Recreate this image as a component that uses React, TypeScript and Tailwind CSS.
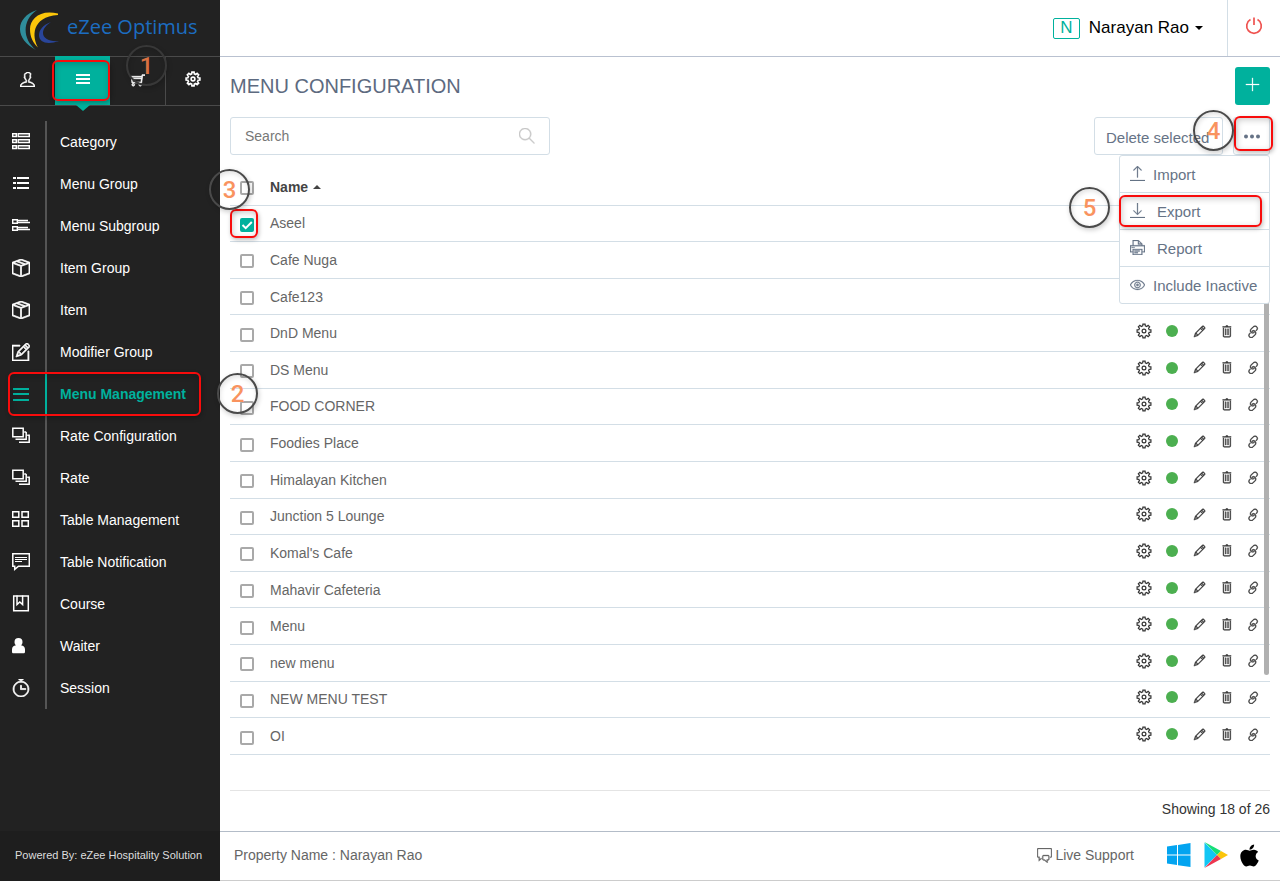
import React from 'react';
import {
  TfiUser, TfiShoppingCart, TfiPackage, TfiPencilAlt, TfiTimer, TfiPencil, TfiTrash,
  TfiLink, TfiSearch, TfiPlus, TfiPrinter, TfiEye, TfiUpload, TfiDownload, TfiComments,
} from 'react-icons/tfi';
import { FaApple } from 'react-icons/fa';

interface MenuItem {
  name: string;
  checked?: boolean;
}

interface NavItem {
  label: string;
  icon: React.ReactNode;
  active?: boolean;
}

const Line = ({ children }: { children: React.ReactNode }) => (
  <svg width="18" height="18" viewBox="0 0 18 18" fill="none" stroke="currentColor" className="shrink-0">
    {children}
  </svg>
);

const ListIcon = () => (
  <Line>
    <path strokeWidth="1.4" d="M.7 .8h3.6v2.700H.7zM6.200 .8h11.100v2.700H6.200zM.7 6.800h3.600v2.700H.7zM6.200 6.800h11.100v2.700H6.200zM.7 12.800h3.600v2.700H.7zM6.200 12.800h11.100v2.700H6.200z" />
  </Line>
);

const BulletIcon = () => (
  <Line>
    <path strokeWidth="2" d="M1 3h3M5 3h12M1 8h3M5 8h12M1 13h3M5 13h12" />
  </Line>
);

const ThumbIcon = () => (
  <Line>
    <path strokeWidth="1.4" d="M.7 2.700h4.600v3.600H.7zM.7 9.700h4.600v3.600H.7z" />
    <path strokeWidth="1.300" d="M6 3.500h10M6 5.500h12M6 10.500h10M6 12.500h12" />
  </Line>
);

const BarsIcon = () => (
  <Line>
    <path strokeWidth="2" d="M1 4h16M1 9h16M1 15h16" />
  </Line>
);

const StackIcon = () => (
  <Line>
    <path strokeWidth="1.5" d="M.8 1.300h10.400v8.400H.8zM3.500 12.200h10.700V5M14.200 5h-2M7 15.200h10.200V8.200h-2" />
  </Line>
);

const GridIcon = () => (
  <Line>
    <path strokeWidth="1.5" d="M.7 .7h6.100v5.600H.7zM10 .7h6.300v5.600H10zM.7 9.700h6.100v5.600H.7zM10 9.700h6.300v5.600H10z" />
  </Line>
);

const NoteIcon = () => (
  <Line>
    <path strokeWidth="1.5" d="M.8 .8h16.500v12.400H6.500L2.700 16.400v-3.200H.8z" />
    <path strokeWidth="1.200" d="M3 4.500h12M3 6.500h12M3 8.500h7" />
  </Line>
);

const BookIcon = () => (
  <Line>
    <path strokeWidth="1.5" d="M1.700 1h14.600v14.800H1.700z" />
    <path strokeWidth="1.500" d="M5 .5v9l2.800-2.500L10.600 9.500V.5" />
  </Line>
);

const PersonIcon = () => (
  <Line>
    <path fill="currentColor" stroke="none" d="M6.500 1a4 4 0 0 1 4 4c0 1.500-.6 2.600-1.500 3.300 2.400.3 4 1.900 4 4.200v2.200c0 1-.6 1.600-1.600 1.600H1.600C.6 16.300 0 15.700 0 14.700v-2.200C0 10.200 1.600 8.600 4 8.300 3.100 7.600 2.500 6.500 2.500 5a4 4 0 0 1 4-4z" />
  </Line>
);

// Eight flat teeth around a small hub
const gearPoints = Array.from({ length: 8 }, (_, i) =>
  [[-14, 5.3], [-9, 7], [9, 7], [14, 5.3]]
    .map(([offset, r]) => {
      const a = ((i * 45 + offset) * Math.PI) / 180;
      return `${(8 + r * Math.sin(a)).toFixed(2)},${(8 - r * Math.cos(a)).toFixed(2)}`;
    })
    .join(' ')
).join(' ');

const GearIcon = ({ strokeWidth = 1.2 }: { strokeWidth?: number }) => (
  <svg width="16" height="16" viewBox="0 0 16 16" fill="none" stroke="currentColor" strokeWidth={strokeWidth}>
    <polygon points={gearPoints} />
    <circle cx="8" cy="8" r="1.900" />
  </svg>
);

const navItems: NavItem[] = [
  { label: 'Category', icon: <ListIcon /> },
  { label: 'Menu Group', icon: <BulletIcon /> },
  { label: 'Menu Subgroup', icon: <ThumbIcon /> },
  { label: 'Item Group', icon: <TfiPackage size={18} strokeWidth={0.7} /> },
  { label: 'Item', icon: <TfiPackage size={18} strokeWidth={0.7} /> },
  { label: 'Modifier Group', icon: <TfiPencilAlt size={18} strokeWidth={0.7} /> },
  { label: 'Menu Management', icon: <BarsIcon />, active: true },
  { label: 'Rate Configuration', icon: <StackIcon /> },
  { label: 'Rate', icon: <StackIcon /> },
  { label: 'Table Management', icon: <GridIcon /> },
  { label: 'Table Notification', icon: <NoteIcon /> },
  { label: 'Course', icon: <BookIcon /> },
  { label: 'Waiter', icon: <PersonIcon /> },
  { label: 'Session', icon: <TfiTimer size={18} strokeWidth={0.7} /> },
];

const menus: MenuItem[] = [
  { name: 'Aseel', checked: true },
  { name: 'Cafe Nuga' },
  { name: 'Cafe123' },
  { name: 'DnD Menu' },
  { name: 'DS Menu' },
  { name: 'FOOD CORNER' },
  { name: 'Foodies Place' },
  { name: 'Himalayan Kitchen' },
  { name: 'Junction 5 Lounge' },
  { name: "Komal's Cafe" },
  { name: 'Mahavir Cafeteria' },
  { name: 'Menu' },
  { name: 'new menu' },
  { name: 'NEW MENU TEST' },
  { name: 'OI' },
];

// Numbered step marker, always laid over the control it points at
const Step = ({ n, className }: { n: number; className: string }) => (
  <span
    className={`pointer-events-none absolute z-30 flex size-[41px] items-center justify-center rounded-full border-2 font-['Roboto'] text-2xl font-medium shadow-[1px_2px_5px_rgba(0,0,0,0.2),inset_1px_2px_5px_rgba(0,0,0,0.12)] ${className}`}
  >
    {n}
  </span>
);

const Outline = ({ className }: { className: string }) => (
  <span
    className={`pointer-events-none absolute z-20 rounded-md border-2 border-[#f80c0c] shadow-[1px_2px_4px_rgba(0,0,0,0.25),inset_1px_2px_6px_rgba(0,0,0,0.2)] ${className}`}
  />
);

const CheckBox = ({ label, checked }: { label: string; checked?: boolean }) => (
  <span className="relative flex size-[14px]">
    <input
      type="checkbox"
      aria-label={label}
      defaultChecked={checked}
      className="peer size-[14px] appearance-none rounded-[2px] border-2 border-[#a9a9a9] bg-white checked:border-[#00b19d] checked:bg-[#00b19d]"
    />
    <svg viewBox="0 0 14 14" className="pointer-events-none absolute inset-0 hidden peer-checked:block" fill="none" stroke="#fff" strokeWidth="2">
      <path d="M2.500 7l3.200 3.200L11.800 4" />
    </svg>
  </span>
);

const Sidebar = () => (
  <aside className="flex w-[220px] shrink-0 flex-col bg-[#222] text-white">
    <a href="#" className="flex h-14 items-center pt-1 pl-5">
      <svg width="40" height="42" viewBox="0 0 40 42">
        <path fill="#2f8d9b" d="M17 1C-5 8-6 30 16 41 2 30 2 11 17 1z" />
        <path fill="#fcc60a" d="M38 4.500C20 0 10 10 10 20c0 8 3 14 8 18.500C12 28 11 8 38 6z" />
        <path fill="#29459a" d="M31 13c-8 3-12 8-12 13 0 8 9 10 20 6-10 1-16-3-16-8 0-4 3-8 8-11z" />
      </svg>
      <span className="mb-[6px] ml-[7px] font-['Open_Sans'] text-xl text-[#1c6dc1]">eZee Optimus</span>
    </a>
    <nav className="grid h-[50px] grid-cols-4 border-y border-[#4a4a4a]">
      <button aria-label="Profile" className="flex items-center justify-center pb-1"><TfiUser size={15} strokeWidth={0.7} /></button>
      <button aria-label="Menus" className="relative -mt-px flex items-center justify-center bg-[#00b19d] pb-[3px]">
        <svg width="14" height="12" viewBox="0 0 14 12" stroke="#fff" strokeWidth="2">
          <path d="M0 2h14M0 6h14M0 10h14" />
        </svg>
        <span className="absolute top-full border-x-[7px] border-t-[6px] border-x-transparent border-t-[#00b19d]" />
        <Outline className="top-1 right-0 bottom-1 -left-[3px]" />
      </button>
      <button aria-label="Orders" className="relative flex items-center justify-center pb-[3px]">
        <TfiShoppingCart size={14} strokeWidth={0.8} />
        <Step n={1} className="-top-3 left-4 border-[#383838] text-[#d97142]" />
      </button>
      <button aria-label="Settings" className="flex items-center justify-center border-l border-[#4a4a4a] pb-1"><GearIcon strokeWidth={1.6} /></button>
    </nav>
    <ul className="mt-[15px] flex-1">
      {navItems.map((item) => (
        <li key={item.label} className="relative">
          <a href="#" className={`flex h-[42px] items-center text-sm ${item.active ? 'font-bold text-[#00b19d]' : ''}`}>
            <span className="flex w-[45px] items-center pl-3">{item.icon}</span>
            <span className={`flex h-full items-center border-l-2 pl-[13px] ${item.active ? 'border-[#00b19d]' : 'border-[#555]'}`}>
              {item.label}
            </span>
          </a>
          {item.active && <Outline className="-inset-y-px right-[19px] left-2" />}
          {item.active && <Step n={2} className="top-0 -right-[38px] border-[#4a4a4a] text-[#f9935f]" />}
        </li>
      ))}
    </ul>
    <div className="flex h-[50px] items-center bg-[#1e1e1e] pb-[2px] pl-[15px] text-[11px] text-[#ddd]">
      Powered By: eZee Hospitality Solution
    </div>
  </aside>
);

const MoreMenu = () => (
  <div className="absolute top-full right-0 z-10 w-[151px] rounded-[3px] border border-[#d3dee6] bg-white text-[15px] text-[#667386]">
    <button className="flex h-[37px] w-full items-center gap-2 border-b border-[#d3dee6] pt-[3px] pl-[10px]">
      <TfiUpload size={15} strokeWidth={0.3} className="mb-1" />Import
    </button>
    <button className="relative flex h-[37px] w-full items-center gap-3 border-b border-[#d3dee6] pt-[3px] pl-[10px]">
      <TfiDownload size={15} strokeWidth={0.3} className="mb-1" />Export
      <Outline className="inset-y-[2px] right-[7px] -left-px" />
      <Step n={5} className="-top-[6px] -left-[51px] border-[#4a4a4a] text-[#f9935f]" />
    </button>
    <button className="flex h-[37px] w-full items-center gap-3 border-b border-[#d3dee6] pt-[3px] pl-[10px]">
      <TfiPrinter size={15} strokeWidth={0.3} className="mb-1" />Report
    </button>
    <button className="flex h-9 w-full items-center gap-2 pt-[3px] pl-[10px]">
      <TfiEye size={15} strokeWidth={0.3} className="mb-1" />Include Inactive
    </button>
  </div>
);

const Toolbar = () => (
  <div className="mt-3 flex justify-between">
    <label className="flex h-[38px] w-80 items-center rounded-[3px] border border-[#d3dee6] px-[14px]">
      <input type="text" aria-label="Search" placeholder="Search" className="min-w-0 flex-1 text-sm outline-none placeholder:text-[#777]" />
      <TfiSearch size={16} strokeWidth={0.5} className="text-[#c8c8c8]" />
    </label>
    <div className="relative flex gap-[10px] text-[15px] text-[#667386]">
      <button className="relative flex h-[38px] w-[129px] items-center rounded-[3px] border border-[#d3dee6] pt-1 pl-[11px]">
        Delete selected
        <Step n={4} className="-top-2 -right-3 border-[#4a4a4a] text-[#f9935f]" />
      </button>
      <button aria-label="More actions" className="relative flex h-[38px] w-[37px] items-center justify-center rounded-[3px] border border-[#d3dee6]">
        <svg width="16" height="5" viewBox="0 0 16 5" fill="#667386">
          <circle cx="2" cy="2.500" r="2" />
          <circle cx="8" cy="2.500" r="2" />
          <circle cx="14" cy="2.500" r="2" />
        </svg>
        <Outline className="-top-[2px] -right-[4px] bottom-[3px] left-0" />
      </button>
      <MoreMenu />
    </div>
  </div>
);

const MenuTable = () => (
  <div className="relative mt-[14px] flex-1 border-b border-[#e4e4e4]">
    <table className="h-[586px] w-full table-fixed text-left text-sm text-[#666]">
      <colgroup>
        <col className="w-10" />
        <col />
        <col className="w-[140px]" />
      </colgroup>
      <thead>
        <tr className="h-9 border-b border-[#d3dee6]">
          <th className="relative pt-[3px] pl-[10px]">
            <CheckBox label="Select all" />
            <Step n={3} className="top-0 -left-[21px] border-[#4a4a4a] text-[#f9935f]" />
          </th>
          <th className="font-bold text-[#444]">
            Name
            <span className="mb-[3px] ml-[5px] inline-block border-x-4 border-b-4 border-x-transparent border-b-[#444]" />
          </th>
          <th />
        </tr>
      </thead>
      <tbody>
        {menus.map((menu) => (
          <tr key={menu.name} className="border-b border-[#d3dee6]">
            <td className="relative pt-[3px] pl-[10px]">
              <CheckBox label={menu.name} checked={menu.checked} />
              {menu.checked && <Outline className="top-[3px] bottom-[3px] left-0 w-7" />}
            </td>
            <td>{menu.name}</td>
            <td>
              <div className="mb-1 flex items-center justify-between pr-[10px] pl-[6px] text-[#333]">
                <button aria-label="Configure"><GearIcon /></button>
                <button aria-label="Active" className="size-3 rounded-full bg-[#4caf50]" />
                <button aria-label="Edit"><TfiPencil size={13} strokeWidth={0.6} /></button>
                <button aria-label="Delete"><TfiTrash size={13} strokeWidth={0.6} /></button>
                <button aria-label="Link"><TfiLink size={13} strokeWidth={0.6} /></button>
              </div>
            </td>
          </tr>
        ))}
      </tbody>
    </table>
    <div className="absolute top-0 right-px h-[506px] w-[5px] rounded-b bg-[#b0b0b0]" />
  </div>
);

const Footer = () => (
  <footer className="flex h-[50px] items-center border-y border-t-[#b3bcc8] border-b-[#ccc] pr-[18px] pb-[2px] pl-[14px] text-sm text-[#666]">
    <span>Property Name : Narayan Rao</span>
    <a href="#" className="mr-[33px] ml-auto flex items-center gap-[3px]">
      <TfiComments size={15} strokeWidth={0.4} />Live Support
    </a>
    <a href="#" aria-label="Windows app" className="mr-[13px]">
      <svg width="24" height="24" viewBox="0 0 24 24" fill="#03a4f0">
        <path d="M0 3.400l10-1.400v9.500H0zM11 1.900L23.500 0v11.500H11zM0 12.500h10v9.500l-10-1.400zM11 12.500h12.500V24L11 22.200z" />
      </svg>
    </a>
    <a href="#" aria-label="Google Play app" className="mr-[9px]">
      <svg width="24" height="26" viewBox="0 0 24 26">
        <path fill="#12c6f4" d="M.5.500L13 13 .5 25.500z" />
        <path fill="#16df77" d="M.5 0L17 9l-4 4z" />
        <path fill="#fbc50a" d="M17 9l7 4-7 4-4-4z" />
        <path fill="#ed3650" d="M13 13l4 4L.500 26z" />
      </svg>
    </a>
    <a href="#" aria-label="Apple app"><FaApple size={25} className="text-black" /></a>
  </footer>
);

const App = () => {
  return (
    <div className="flex min-h-screen bg-white font-['Liberation_Sans',sans-serif]">
      <Sidebar />
      <div className="flex min-w-0 flex-1 flex-col">
        <header className="flex h-[57px] justify-end border-b border-[#b9c1d0]">
          <button className="mr-6 flex items-center text-[17px] text-black">
            <span className="mr-[9px] flex h-[21px] w-[27px] items-center justify-center rounded-[2px] border border-[#00b19d] text-[#00b19d]">N</span>
            Narayan Rao
            <span className="ml-[6px] border-x-4 border-t-4 border-x-transparent border-t-black" />
          </button>
          <button aria-label="Log out" className="flex w-[53px] items-center justify-center border-l border-[#d3dee6] pb-1 text-[#ef5350]">
            <svg width="18" height="18" viewBox="0 0 18 18" fill="none" stroke="currentColor" strokeWidth="1.700">
              <path d="M9 .500v7.500M5.500 2.600a7.300 7.300 0 1 0 7 0" />
            </svg>
          </button>
        </header>
        <main className="flex flex-1 flex-col px-[10px] pt-[10px]">
          <div className="flex items-center justify-between">
            <h1 className="text-xl text-[#5d6a80]">MENU CONFIGURATION</h1>
            <button aria-label="Add menu" className="flex h-[38px] w-[35px] items-center justify-center rounded-[3px] bg-[#00b19d] pb-1 text-white">
              <TfiPlus size={15} strokeWidth={0.3} />
            </button>
          </div>
          <Toolbar />
          <MenuTable />
          <div className="flex h-10 items-center justify-end pb-1 text-sm text-[#333]">Showing 18 of 26</div>
        </main>
        <Footer />
      </div>
    </div>
  );
};

export default App;
